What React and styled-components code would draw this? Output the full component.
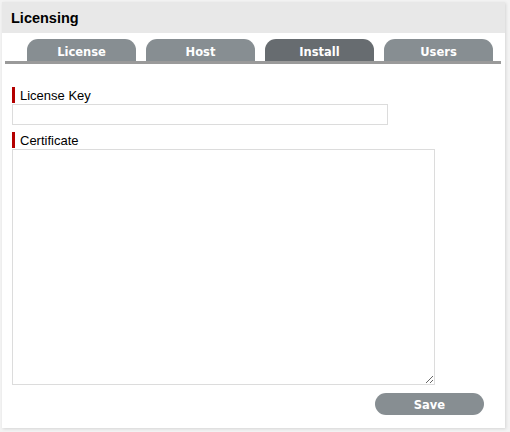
import React from "react";
import styled, { createGlobalStyle } from "styled-components";

const Global = createGlobalStyle`
  html, body { margin: 0; padding: 0; background: #f3f3f3; }
  body { font-family: "Liberation Sans", Arial, sans-serif; }
`;

const Page = styled.div`
  padding: 2px 5px 4px 2px;
`;

const Panel = styled.section`
  width: 503px;
  height: 426px;
  background: #fff;
  box-shadow: 1px 1px 3px rgba(0,0,0,0.12);
  display: flex;
  flex-direction: column;
  box-sizing: border-box;
`;

const Header = styled.header`
  height: 31px;
  background: #e8e8e8;
  display: flex;
  align-items: center;
  padding-left: 9px;
  padding-top: 1px;
  box-sizing: border-box;
  font-family: "Liberation Sans", Arial, sans-serif;
  font-weight: bold;
  font-size: 14.5px;
  color: #000;
`;

const TabBar = styled.nav`
  margin: 6px 4px 0 3px;
  padding-left: 22px;
  display: flex;
  gap: 10px;
  border-bottom: 3px solid #9a9a9a;
`;

const Tab = styled.div`
  width: 109px;
  height: 22px;
  border-radius: 11px 11px 0 0;
  background: ${p => (p.$active ? "#676c70" : "#878e92")};
  color: #fff;
  font-family: "DejaVu Sans", Verdana, sans-serif;
  font-weight: bold;
  font-size: 11.5px;
  display: flex;
  align-items: center;
  justify-content: center;
  padding-top: 3px;
  box-sizing: border-box;
`;

const Form = styled.div`
  padding: 23px 0 0 10px;
  display: flex;
  flex-direction: column;
`;

const Label = styled.label`
  display: flex;
  align-items: center;
  height: 17px;
  margin-top: ${p => p.$mt || 0}px;
  font-size: 13px;
  color: #000;
  &::before {
    content: "";
    width: 3px;
    height: 16px;
    background: #b40000;
    margin-right: 5px;
    align-self: flex-start;
  }
`;

const Input = styled.input`
  width: 376px;
  height: 21px;
  box-sizing: border-box;
  border: 1px solid #dcdcdc;
  margin: 0;
  padding: 2px 4px;
  font-size: 13px;
  outline: none;
`;

const TextArea = styled.textarea`
  width: 423px;
  height: 236px;
  box-sizing: border-box;
  border: 1px solid #dcdcdc;
  margin: 0;
  padding: 2px 4px;
  font-size: 13px;
  outline: none;
  display: block;
`;

const Actions = styled.div`
  display: flex;
  padding-left: 363px;
  margin-top: 8px;
`;

const Button = styled.button`
  width: 109px;
  height: 22px;
  border: none;
  border-radius: 11px;
  background: #878e92;
  color: #fff;
  font-family: "DejaVu Sans", Verdana, sans-serif;
  font-weight: bold;
  font-size: 11.5px;
  padding: 1px 0 0;
  cursor: pointer;
`;

export default function App() {
  return (
    <>
      <Global />
      <Page>
        <Panel>
          <Header>Licensing</Header>
          <TabBar>
            <Tab>License</Tab>
            <Tab>Host</Tab>
            <Tab $active>Install</Tab>
            <Tab>Users</Tab>
          </TabBar>
          <Form>
            <Label>License Key</Label>
            <Input type="text" />
            <Label $mt={7}>Certificate</Label>
            <TextArea />
            <Actions>
              <Button>Save</Button>
            </Actions>
          </Form>
        </Panel>
      </Page>
    </>
  );
}
